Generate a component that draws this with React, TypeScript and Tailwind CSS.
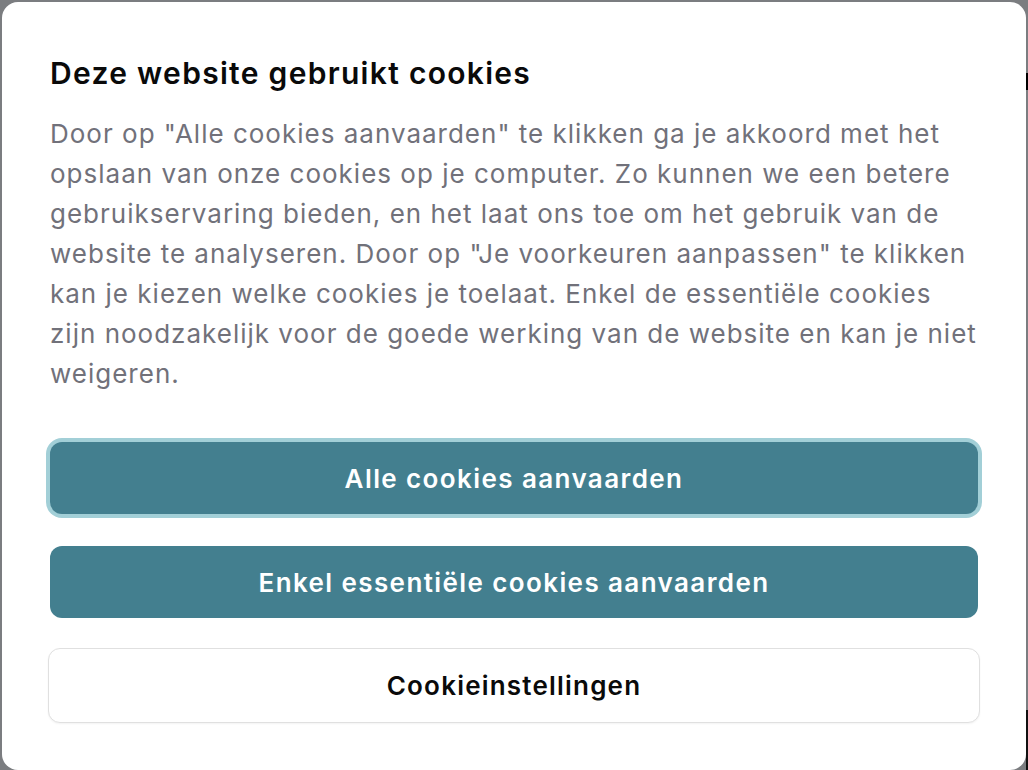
import type { ReactNode } from "react";

const body =
  'Door op "Alle cookies aanvaarden" te klikken ga je akkoord met het opslaan van onze cookies op je computer. Zo kunnen we een betere gebruikservaring bieden, en het laat ons toe om het gebruik van de website te analyseren. Door op "Je voorkeuren aanpassen" te klikken kan je kiezen welke cookies je toelaat. Enkel de essentiële cookies zijn noodzakelijk voor de goede werking van de website en kan je niet weigeren.';

function PrimaryButton({ children, focused }: { children: ReactNode; focused?: boolean }) {
  return (
    <button
      className={
        focused
          ? "h-[72px] w-full rounded-[12px] bg-[#437f8f] text-[26px] font-semibold tracking-[1.4px] text-white ring-4 ring-[#a2cfd7]"
          : "h-[72px] w-full rounded-[12px] bg-[#437f8f] text-[26px] font-semibold tracking-[1.4px] text-white"
      }
    >
      {children}
    </button>
  );
}

export default function App() {
  return (
    <div className="relative h-[770px] w-[1028px] overflow-hidden bg-[#7b7d80] pl-[2px] pt-[2px] font-['Inter',sans-serif]">
      <div className="absolute right-0 top-[73px] h-[17px] w-[2px] bg-black" />
      <div className="absolute bottom-0 right-0 h-[60px] w-[2px] bg-[#111]" />
      <div className="flex h-[768px] w-[1024px] flex-col rounded-[16px] bg-white px-[48px] pt-[53px]">
        <h2 className="text-[30px] font-semibold leading-[36px] tracking-[1.3px] text-[#0a0a0a]">
          Deze website gebruikt cookies
        </h2>
        <p className="mt-[23px] text-[26px] leading-[40px] tracking-[1px] text-[#71717a]">{body}</p>
        <div className="mt-[48px] flex flex-col gap-[32px]">
          <PrimaryButton focused>Alle cookies aanvaarden</PrimaryButton>
          <PrimaryButton>Enkel essentiële cookies aanvaarden</PrimaryButton>
          <button className="-mx-[2px] -mt-[2px] h-[75px] rounded-[12px] border border-[#e0e0e0] bg-white text-[26px] font-semibold tracking-[1.2px] text-[#0a0a0a] shadow-[0_1px_2px_rgba(0,0,0,0.05)]">
            Cookieinstellingen
          </button>
        </div>
      </div>
    </div>
  );
}
